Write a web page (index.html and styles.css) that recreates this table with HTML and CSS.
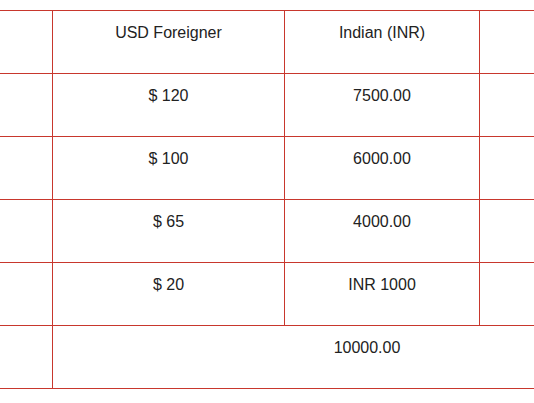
FILE: index.html
```html
<!DOCTYPE html>
<html>
<head>
<meta charset="utf-8">
<link rel="stylesheet" href="styles.css">
</head>
<body>
<div class="sheet">
  <table class="rates">
    <colgroup>
      <col class="c-lead">
      <col class="c-usd">
      <col class="c-inr">
      <col class="c-tail">
    </colgroup>
    <tr class="head">
      <td></td>
      <td>USD Foreigner</td>
      <td>Indian (INR)</td>
      <td></td>
    </tr>
    <tr>
      <td></td>
      <td>$ 120</td>
      <td>7500.00</td>
      <td></td>
    </tr>
    <tr>
      <td></td>
      <td>$ 100</td>
      <td>6000.00</td>
      <td></td>
    </tr>
    <tr>
      <td></td>
      <td>$ 65</td>
      <td>4000.00</td>
      <td></td>
    </tr>
    <tr>
      <td></td>
      <td>$ 20</td>
      <td>INR 1000</td>
      <td></td>
    </tr>
    <tr>
      <td></td>
      <td colspan="3">10000.00</td>
    </tr>
  </table>
</div>
</body>
</html>
```
FILE: styles.css
```css
html, body {
  margin: 0;
  padding: 0;
  background: #ffffff;
}

.sheet {
  width: 534px;
  height: 403px;
  overflow: hidden;
  padding-top: 10px;
  box-sizing: border-box;
}

.rates {
  border-collapse: separate;
  border-spacing: 0;
  table-layout: fixed;
  width: 682px;
  font-family: "Liberation Sans", Arial, sans-serif;
  font-size: 16px;
  color: #222222;
}

.c-lead { width: 53px; }
.c-usd { width: 232px; }
.c-inr { width: 195px; }
.c-tail { width: 202px; }

.rates td {
  box-sizing: border-box;
  height: 63px;
  padding: 13px 0 0 0;
  vertical-align: top;
  text-align: center;
  border-right: 1px solid #c8372d;
  border-bottom: 1px solid #c8372d;
  line-height: normal;
}

.rates .head td {
  height: 64px;
  border-top: 1px solid #c8372d;
  padding-top: 13px;
}
```
